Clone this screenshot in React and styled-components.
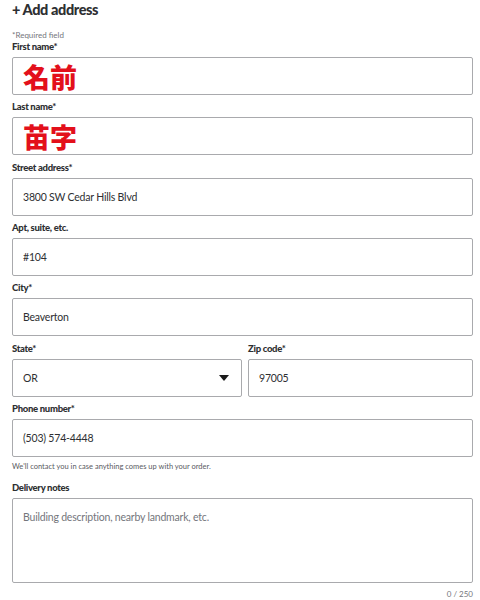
import React from 'react';
import styled, {createGlobalStyle} from 'styled-components';

const GlobalStyle = createGlobalStyle`
  body {
    margin: 0;
    background: #ffffff;
    font-family: Lato, "Noto Sans", sans-serif;
    color: #2e2f32;
  }
`;

const Page = styled.div`
  width: 461px;
  padding: 0 0 0 12px;
`;

const Title = styled.h2`
  margin: 0;
  font-size: 14.5px;
  line-height: 20px;
  font-weight: 900;
  letter-spacing: -0.4px;
  color: #2e2f32;
`;

const Required = styled.div`
  margin-top: 10px;
  font-size: 8px;
  line-height: 11px;
  color: #74767c;
`;

const Field = styled.div`
  display: flex;
  flex-direction: column;
  margin-bottom: ${p => (p.$gap === undefined ? 6.33 : p.$gap)}px;
`;

const Label = styled.label`
  font-size: 9.5px;
  line-height: 12px;
  font-weight: 900;
  letter-spacing: -0.3px;
  color: #2e2f32;
  margin-bottom: 4px;
`;

const Box = styled.div`
  box-sizing: border-box;
  height: ${p => p.$height || 38}px;
  border: 1px solid #a9aaad;
  border-radius: 2px;
  display: flex;
  align-items: ${p => (p.$top ? 'flex-start' : 'center')};
  padding: ${p => (p.$top ? '12px 10px' : '0 10px')};
  font-size: 10.5px;
  letter-spacing: -0.2px;
  color: ${p => (p.$placeholder ? '#74767c' : '#2e2f32')};
  justify-content: space-between;
`;

const BigRed = styled.span`
  font-family: "Noto Sans CJK JP", sans-serif;
  font-weight: 900;
  font-size: 27px;
  letter-spacing: 0;
  color: #e3101b;
  line-height: 1;
`;

const Row = styled.div`
  display: grid;
  grid-template-columns: 230px 1fr;
  column-gap: 6px;
`;

const Caret = styled.span`
  width: 0;
  height: 0;
  border-left: 5px solid transparent;
  border-right: 5px solid transparent;
  border-top: 6px solid #1a1a1a;
  margin-right: 2px;
`;

const Helper = styled.div`
  font-size: 7.5px;
  line-height: 10px;
  color: #5a5b5f;
  margin-top: 5px;
`;

const Counter = styled.div`
  text-align: right;
  font-size: 8px;
  line-height: 10px;
  color: #74767c;
  margin-top: 6px;
`;

const fields = [
  {label: 'Street address*', value: '3800 SW Cedar Hills Blvd'},
  {label: 'Apt, suite, etc.', value: '#104'},
  {label: 'City*', value: 'Beaverton'},
];

export default function App() {
  return (
    <Page>
      <GlobalStyle />
      <Title>+ Add address</Title>
      <Required>*Required field</Required>
      <Field>
        <Label>First name*</Label>
        <Box><BigRed>名前</BigRed></Box>
      </Field>
      <Field>
        <Label>Last name*</Label>
        <Box><BigRed>苗字</BigRed></Box>
      </Field>
      {fields.map(f => (
        <Field key={f.label}>
          <Label>{f.label}</Label>
          <Box>{f.value}</Box>
        </Field>
      ))}
      <Row>
        <Field>
          <Label>State*</Label>
          <Box>OR<Caret /></Box>
        </Field>
        <Field>
          <Label>Zip code*</Label>
          <Box>97005</Box>
        </Field>
      </Row>
      <Field $gap={10}>
        <Label>Phone number*</Label>
        <Box>(503) 574-4448</Box>
        <Helper>We'll contact you in case anything comes up with your order.</Helper>
      </Field>
      <Field $gap={0}>
        <Label>Delivery notes</Label>
        <Box $height={85} $top $placeholder>Building description, nearby landmark, etc.</Box>
        <Counter>0 / 250</Counter>
      </Field>
    </Page>
  );
}
